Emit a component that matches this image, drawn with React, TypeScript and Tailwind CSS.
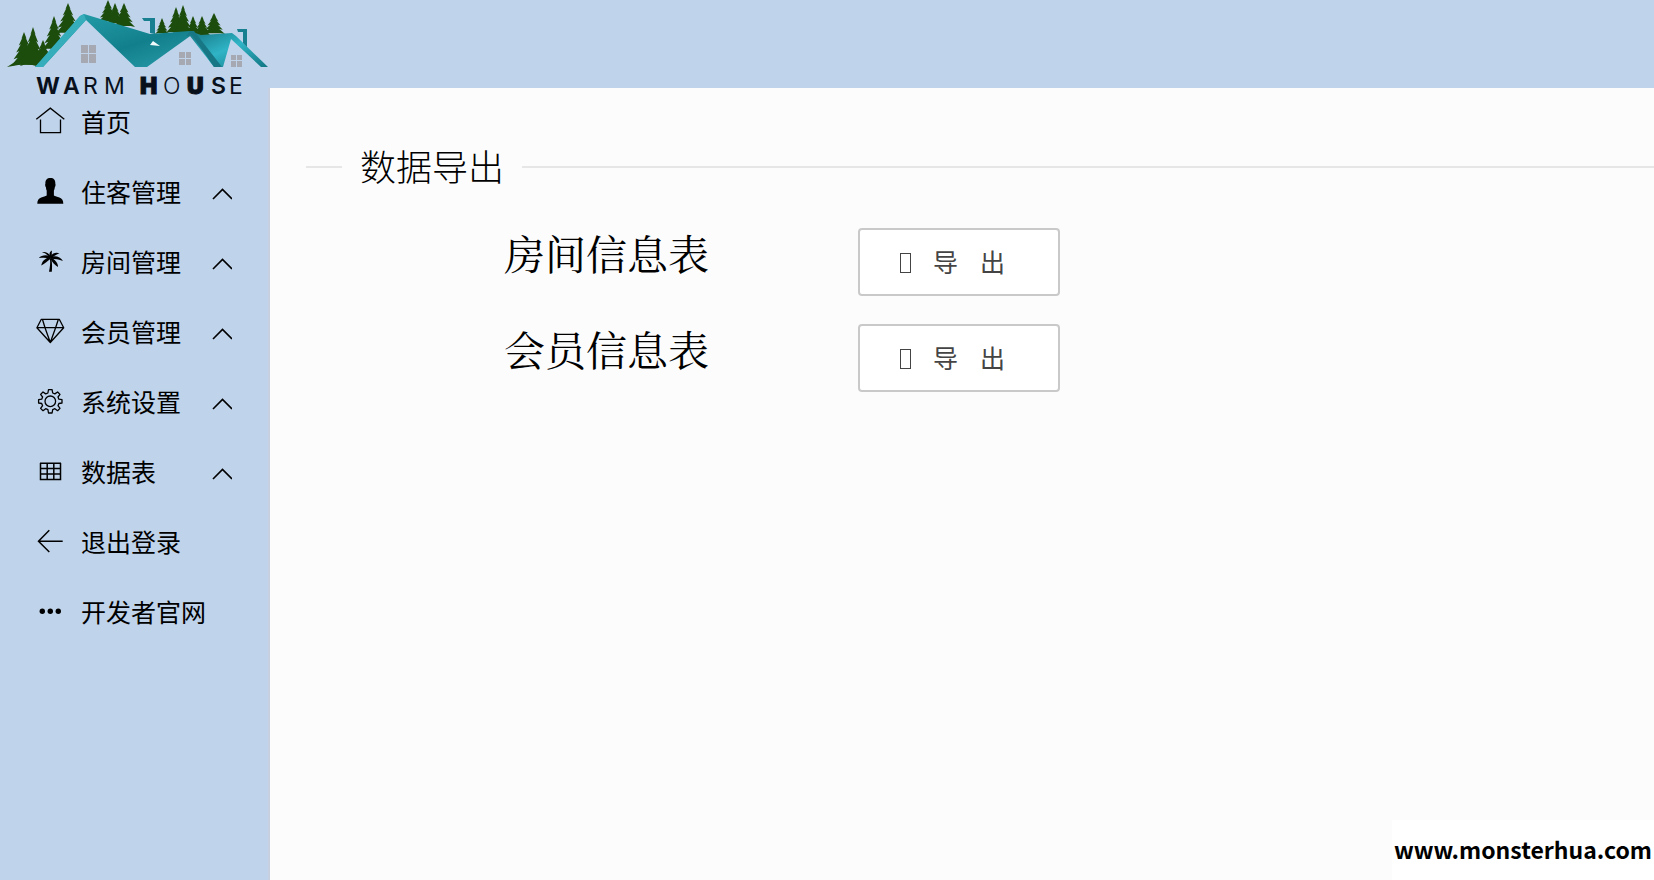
import type { ReactNode } from 'react'

type MenuItem = {
	label: string
	icon: ReactNode
	expandable?: boolean
}

// pine trees behind the roofs: [center x, top, bottom, half width]
const trees = [
	[24, 32, 66, 13],
	[33, 27, 66, 13],
	[43, 40, 62, 10],
	[54, 16, 50, 12],
	[68, 3, 34, 13],
	[108, 0, 22, 10],
	[115, 3, 24, 9],
	[124, 3, 27, 11],
	[162, 18, 34, 7],
	[176, 7, 33, 10],
	[183, 5, 33, 10],
	[193, 16, 35, 8],
	[202, 16, 36, 9],
	[214, 13, 34, 11],
]

function treePoints(cx: number, top: number, bottom: number, half: number) {
	const tiers = 5
	const step = (bottom - top) / tiers
	const right: string[] = []
	const left: string[] = []
	for (let i = 1; i <= tiers; i++) {
		const w = (half * i) / tiers
		const y = top + step * i
		right.push(`${cx + w},${y}`, `${cx + w * 0.6},${y - step * 0.2}`)
		left.unshift(`${cx - w * 0.6},${y - step * 0.2}`, `${cx - w},${y}`)
	}
	return [`${cx},${top}`, ...right, ...left].join(' ')
}

function Logo() {
	return (
		<svg width="270" height="104" viewBox="0 0 270 104" className="block shrink-0" role="img" aria-label="Warm House">
			<defs>
				<linearGradient id="roof" x1="0" y1="0" x2="1" y2="1">
					<stop offset="0" stopColor="#27a3b0" />
					<stop offset="0.6" stopColor="#12808c" />
					<stop offset="1" stopColor="#2a9cab" />
				</linearGradient>
				<linearGradient id="roofSmall" x1="0" y1="0" x2="1" y2="1">
					<stop offset="0" stopColor="#15727e" />
					<stop offset="0.5" stopColor="#2fb4c6" />
					<stop offset="1" stopColor="#127683" />
				</linearGradient>
			</defs>
			<g fill="#1d4d0d">
				{trees.map(([cx, top, bottom, half]) => (
					<polygon key={cx} points={treePoints(cx, top, bottom, half)} />
				))}
				<path d="M7 67 18 60 34 50 48 52 40 66 24 64Z" />
			</g>
			{/* walls */}
			<path d="M85 20 40 67H136Z M191 35 147 67H214Z M231 38 222 67H262Z" fill="#bfd3ea" />
			{/* roofs */}
			<path d="M84 14 150 34 190 31 193 34 147 67H135L86 20 43 67H35L80 16Z" fill="url(#roof)" />
			<path d="M190 31 201 35 232 33 236 36 268 67H261L231 39 223 67H214L190 36 186 36Z" fill="url(#roofSmall)" />
			<path d="M84 14 80 16 35 67H43L86 20Z" fill="#35adbb" />
			<path d="M189 31 194 31 222 67H214Z" fill="#177784" />
			<path d="M142 18H155V34L150 33V21H144Z M237 29H247V47L243 43V32H238Z" fill="#177f8f" />
			<path d="M150 45 153 41 160 46Z" fill="#f2fbfb" />
			{/* windows */}
			<g fill="#a7a9b2">
				<path d="M81 45h7v8h-7z M89 45h7v8h-7z M81 54h7v9h-7z M89 54h7v9h-7z" />
				<path d="M179 52h6v6h-6z M186 52h5v6h-5z M179 59h6v6h-6z M186 59h5v6h-5z" />
				<path d="M231 55h5v5h-5z M237 55h5v5h-5z M231 61h5v6h-5z M237 61h5v6h-5z" />
			</g>
			<text y="94" fontSize="23" fill="#08101c" className="font-[Inter,sans-serif]">
				<tspan x="36" fontWeight="700">W</tspan>
				<tspan x="63" fontWeight="600">A</tspan>
				<tspan x="83" fontWeight="400">R</tspan>
				<tspan x="104" fontWeight="400">M</tspan>
				<tspan x="140" fontWeight="900" stroke="#08101c" strokeWidth="1">H</tspan>
				<tspan x="163" fontWeight="300">O</tspan>
				<tspan x="187" fontWeight="900" stroke="#08101c" strokeWidth="1">U</tspan>
				<tspan x="211" fontWeight="600">S</tspan>
				<tspan x="229" fontWeight="400">E</tspan>
			</text>
		</svg>
	)
}

function Icon({ children }: { children: ReactNode }) {
	return (
		<svg
			width="28"
			height="28"
			viewBox="0 0 28 28"
			fill="none"
			stroke="currentColor"
			strokeWidth="1.3"
			className="mb-1 shrink-0 overflow-visible"
			aria-hidden="true"
		>
			{children}
		</svg>
	)
}

const menu: MenuItem[] = [
	{
		label: '首页',
		icon: <path d="M.3 12.3 14.3 1.2 28.3 12.3M4.5 12.5V25.6H24.5V12.5" />,
	},
	{
		label: '住客管理',
		expandable: true,
		icon: (
			<path
				fill="currentColor"
				stroke="none"
				d="M14.4 1C11 1 9.2 3 9.4 6.5c-.5.8-.2 3 .5 3.8.2 1.7.4 2.500.8 3.200v5c-1.200.8-3.400 1.200-5.500 1.900C2.400 21.400 1.300 23 1.300 26.700H27.300c0-3.700-1.100-5.300-3.900-6.300-2.100-.7-4.300-1.100-5.500-1.900v-5c.4-.7.8-1.500.9-3.200.7-.8 1-3 .5-3.800C19.500 3 17.800 1 14.400 1Z"
			/>
		),
	},
	{
		label: '房间管理',
		expandable: true,
		icon: (
			<g fill="currentColor" stroke="none">
				<path d="M14 12C14.5 16 14 20 13 24.8H15.8C16.3 20 16.2 16 15.3 12Z" />
				<path d="M15 10C13 6 9.5 4.5 6 5.3 9 6 12 8 14 11Z" />
				<path d="M15 9.5C10.5 7.5 5.5 8 2.8 11 6.5 10.5 10.5 10.5 14 11.5Z" />
				<path d="M14.5 10C9.5 11 5.8 14 5.3 18.5 8.5 16.5 12 14 15 11.5Z" />
				<path d="M14 10C13 7 13.5 4.5 16 3.5 15.5 6 16 8 15.8 10Z" />
				<path d="M14.5 10C16 6 20 4.8 23.5 6.3 20.5 7.5 18 9 15.5 11Z" />
				<path d="M14.5 10C19 8 24.5 9.5 27 14 23 12.5 19 12 15 11.8Z" />
				<path d="M14.5 10.5C18.5 12 22 15.5 22 20 19 18.5 16.5 15.5 14.5 12Z" />
			</g>
		),
	},
	{
		label: '会员管理',
		expandable: true,
		icon: (
			<path
				strokeLinejoin="round"
				d="M5.3 2.3H23.3L27.7 10.7 14.3 25.5.9 10.7ZM.9 10.7H27.7M6.5 2.5 9 10.7 14.3 25.5 19.6 10.7 22.3 2.5"
			/>
		),
	},
	{
		label: '系统设置',
		expandable: true,
		icon: (
			<>
				<circle cx="14.3" cy="14.3" r="5.3" />
				<path
					strokeLinejoin="round"
					d="M12.5 2.7H16.1L16.7 6 18.9 6.9 21.6 5 24 7.4 22 10 22.9 12.2 26 12.7V16L22.9 16.5 22 18.7 24 21.4 21.6 23.7 18.9 21.7 16.7 22.6 16.1 26H12.5L11.9 22.6 9.7 21.7 7 23.7 4.6 21.4 6.6 18.7 5.7 16.5 2.6 16V12.7L5.7 12.2 6.6 10 4.6 7.4 7 5 9.7 6.9 11.9 6Z"
				/>
			</>
		),
	},
	{
		label: '数据表',
		expandable: true,
		icon: (
			<path
				strokeWidth="1.5"
				d="M4.5 6V22.5H24.5V6M4 6.3H25M4.5 11.5H24.5M4.5 17H24.5M11.2 6V22.5M17.8 6V22.5"
			/>
		),
	},
	{
		label: '退出登录',
		icon: <path strokeWidth="1.5" d="M26.7 14.3H2.5M13.3 3.3 2.5 14.3 13.3 25" />,
	},
	{
		label: '开发者官网',
		icon: (
			<g fill="currentColor" stroke="none">
				<circle cx="6.3" cy="14.3" r="2.7" />
				<circle cx="14.3" cy="14.3" r="2.7" />
				<circle cx="22.3" cy="14.3" r="2.7" />
			</g>
		),
	},
]

const exportTables = ['房间信息表', '会员信息表']

export default function App() {
	return (
		<div className="flex min-h-screen flex-col bg-[#fcfcfc] font-['Noto_Sans_CJK_SC',sans-serif] text-black">
			<header className="relative z-10 h-[88px] bg-[#bfd3ea]">
				<Logo />
			</header>

			<div className="flex flex-1">
				<nav className="w-[270px] shrink-0 border-r-2 border-[#c6d0e0] bg-[#bfd3ea]">
					<ul>
						{menu.map((item) => (
							<li key={item.label}>
								<a href="#" className="flex h-[70px] items-center px-9 text-[25px] text-black">
									<Icon>{item.icon}</Icon>
									<span className="mb-0.5 ml-[17px]">{item.label}</span>
									{item.expandable && (
										<svg
											width="20"
											height="12"
											viewBox="0 0 20 12"
											fill="none"
											stroke="currentColor"
											strokeWidth="1.6"
											className="mt-0.5 ml-auto"
											aria-hidden="true"
										>
											<path d="M1 11 10.5 1.5 20 11" />
										</svg>
									)}
								</a>
							</li>
						))}
					</ul>
				</nav>

				<main className="min-w-0 flex-1 pt-[52px] pl-9">
					<div className="flex items-center">
						<span className="h-0.5 w-9 bg-[#e6e6e6]" />
						<h1 className="px-[18px] pb-1 text-[36px] leading-[50px] font-light">数据导出</h1>
						<span className="h-0.5 flex-1 bg-[#e6e6e6]" />
					</div>

					<div className="mt-[34px] flex flex-col gap-7 pl-[198px]">
						{exportTables.map((name) => (
							<div key={name} className="flex items-start">
								<h2 className="w-[354px] font-['Noto_Serif_CJK_SC','Noto_Sans_CJK_SC',serif] text-[41px] leading-[50px]">
									{name}
								</h2>
								<button
									type="button"
									aria-label={`导出${name}`}
									className="flex h-[68px] w-[202px] items-center gap-[22px] rounded border-2 border-[#c9c9c9] bg-white pl-10 text-[25px] text-[#444]"
								>
									<span className="mt-0.5 h-5 w-[11px] border border-[#444]" />
									<span>导</span>
									<span>出</span>
								</button>
							</div>
						))}
					</div>
				</main>
			</div>

			<a
				href="https://www.monsterhua.com"
				className="fixed right-0 bottom-0 h-[60px] bg-white px-0.5 text-[23px] leading-[58px] font-bold"
			>
				www.monsterhua.com
			</a>
		</div>
	)
}
